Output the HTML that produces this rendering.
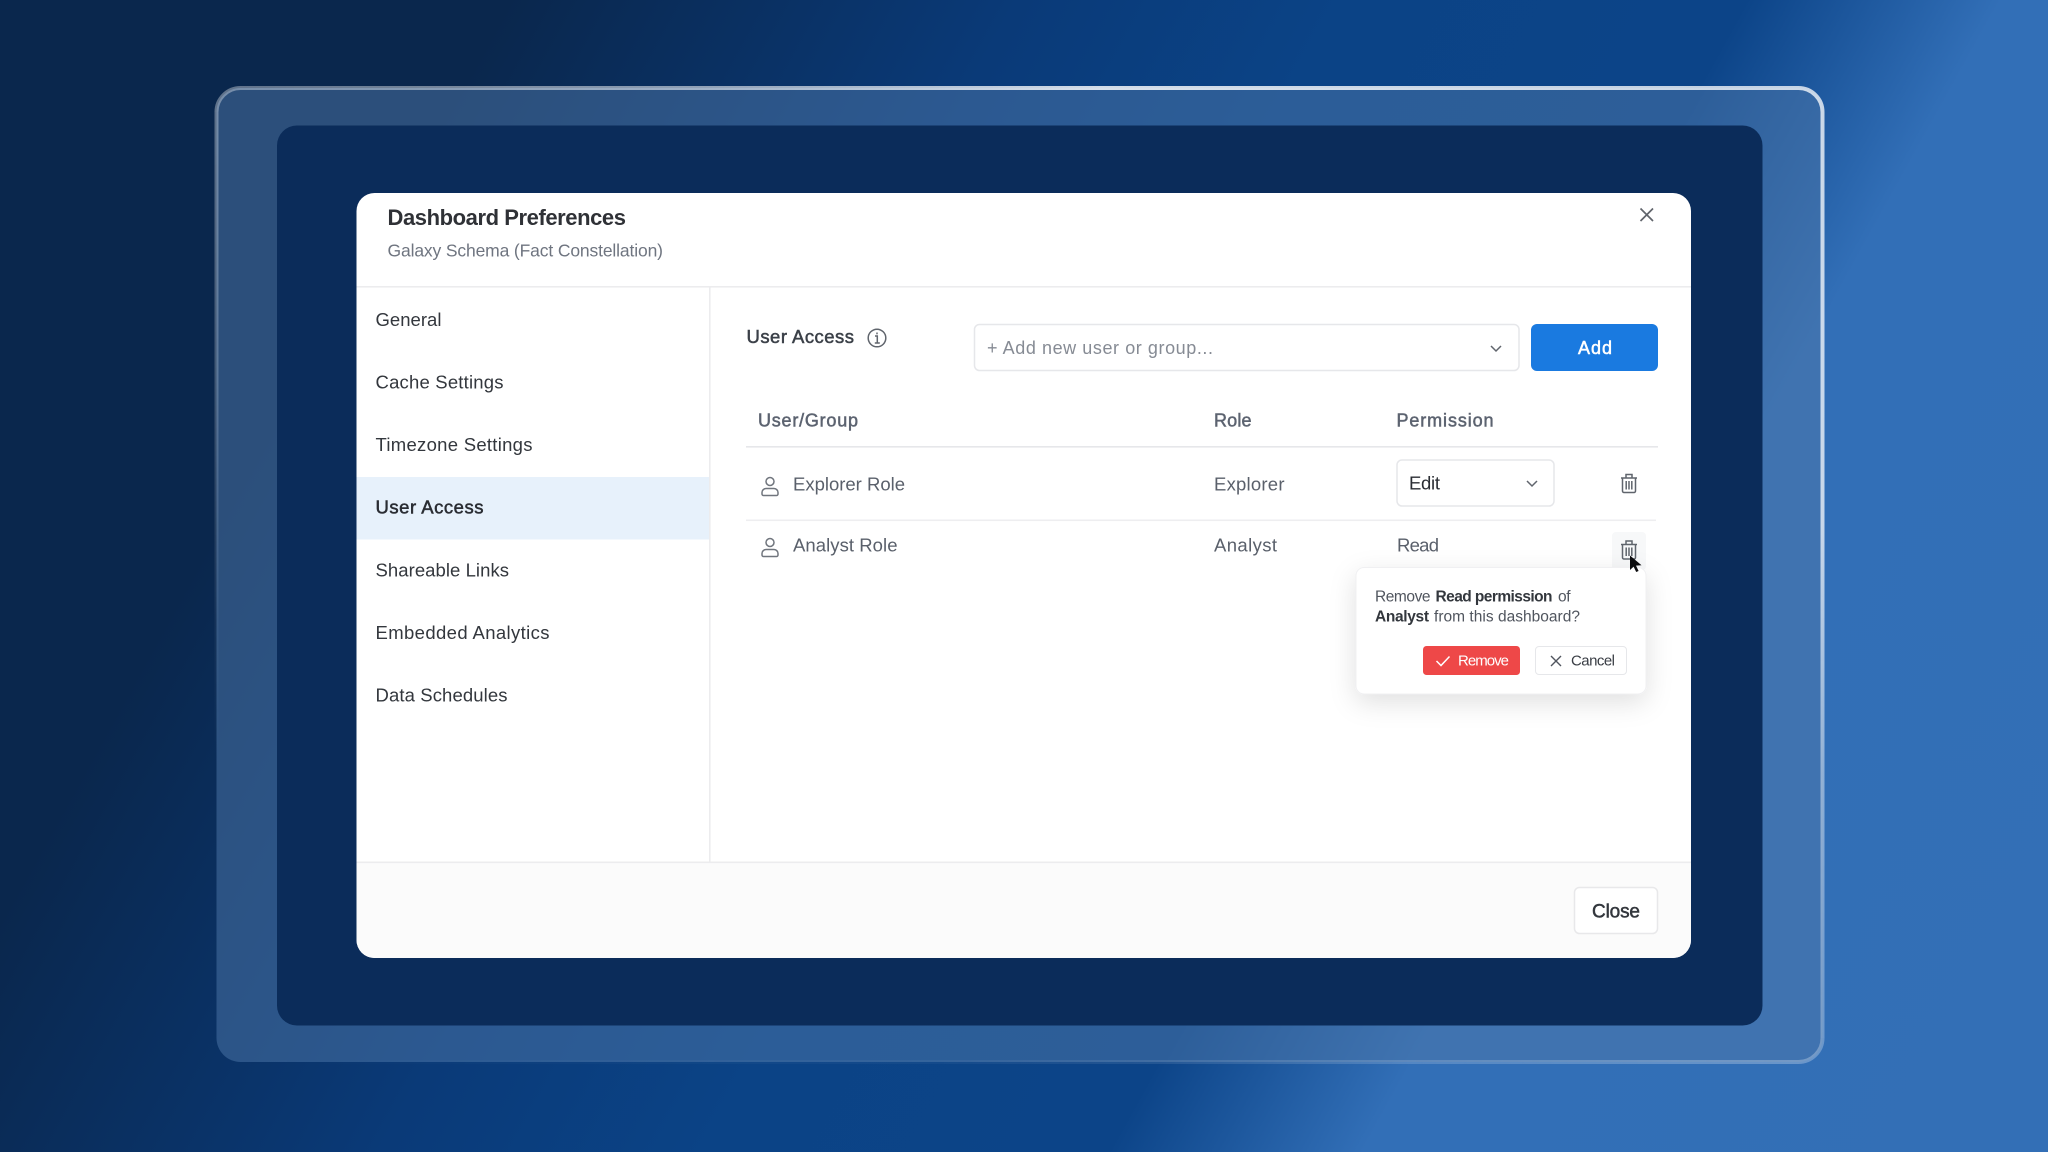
<!DOCTYPE html>
<html><head><meta charset="utf-8"><style>
html,body{margin:0;padding:0;width:2048px;height:1152px;overflow:hidden;background:linear-gradient(119deg,#0a274d 0%,#0a274d 19%,#0a3a78 38%,#0b4386 50%,#0c4488 65%,#326fb7 74.5%,#336fb6 100%)}
svg{position:absolute;left:0;top:0;display:block;filter:blur(.3px)}
text{font-family:"Liberation Sans",Arial,sans-serif;white-space:pre}
.m{stroke-width:.5px}
</style></head><body>
<svg width="2048" height="1152" viewBox="0 0 2048 1152" xmlns="http://www.w3.org/2000/svg">
<defs>
<linearGradient id="gt" gradientUnits="userSpaceOnUse" x1="216" y1="0" x2="1824" y2="0"><stop offset="0" stop-color="#fff" stop-opacity=".35"/><stop offset=".3" stop-color="#fff" stop-opacity=".55"/><stop offset=".55" stop-color="#fff" stop-opacity=".82"/><stop offset="1" stop-color="#fff" stop-opacity=".75"/></linearGradient>
<linearGradient id="gl" gradientUnits="userSpaceOnUse" x1="0" y1="88" x2="0" y2="1062"><stop offset="0" stop-color="#fff" stop-opacity=".35"/><stop offset=".3" stop-color="#fff" stop-opacity=".22"/><stop offset=".55" stop-color="#fff" stop-opacity=".05"/><stop offset=".7" stop-color="#fff" stop-opacity="0"/></linearGradient>
<linearGradient id="gr" gradientUnits="userSpaceOnUse" x1="0" y1="88" x2="0" y2="1062"><stop offset="0" stop-color="#fff" stop-opacity=".75"/><stop offset=".45" stop-color="#fff" stop-opacity=".72"/><stop offset=".7" stop-color="#fff" stop-opacity=".45"/><stop offset="1" stop-color="#fff" stop-opacity=".28"/></linearGradient>
<linearGradient id="gb" gradientUnits="userSpaceOnUse" x1="216" y1="0" x2="1824" y2="0"><stop offset="0" stop-color="#fff" stop-opacity="0"/><stop offset=".45" stop-color="#fff" stop-opacity=".04"/><stop offset="1" stop-color="#fff" stop-opacity=".28"/></linearGradient>
<filter id="ps" x="-25%" y="-30%" width="150%" height="170%"><feDropShadow dx="0" dy="8" stdDeviation="13" flood-color="#000" flood-opacity=".12"/></filter>
<clipPath id="mc"><rect x="356.5" y="193" width="1334.5" height="765" rx="18"/></clipPath>
<g id="tr" fill="none" stroke="#5f646c" stroke-width="1.5"><path d="M-8 -5.5H8M-3 -6V-9H3V-6M-6.5 -5.5V7.5A1.5 1.5 0 0 0 -5 9H5A1.5 1.5 0 0 0 6.5 7.5V-5.5M-2.8 -2.5V6M0 -2.5V6M2.8 -2.5V6"/></g>
<g id="pe" fill="none" stroke="#70757d" stroke-width="1.5"><circle cx="0" cy="-5" r="4"/><path d="M-4 2H4A4 4 0 0 1 8 6V7.5A1.5 1.5 0 0 1 6.5 9H-6.5A1.5 1.5 0 0 1 -8 7.5V6A4 4 0 0 1 -4 2Z"/></g>
</defs>
<rect x="216.5" y="88" width="1606" height="974" rx="24" fill="#4e78aa" fill-opacity=".5"/>
<g fill="none" stroke-width="4">
<path d="M216.5 112A24 24 0 0 1 240.5 88H1798.5A24 24 0 0 1 1822.5 112" stroke="url(#gt)"/>
<path d="M216.5 112V1038" stroke="url(#gl)"/>
<path d="M1822.5 112V1038" stroke="url(#gr)"/>
<path d="M216.5 1038A24 24 0 0 0 240.5 1062H1798.5A24 24 0 0 0 1822.5 1038" stroke="url(#gb)"/>
</g>
<rect x="277" y="125.5" width="1485.5" height="900" rx="20" fill="#0b2c5a"/>
<g clip-path="url(#mc)">
<rect x="356.5" y="193" width="1334.5" height="765" fill="#fff"/>
<rect x="356.5" y="862.5" width="1334.5" height="96" fill="#fbfbfb"/>
<rect x="356.5" y="477" width="352.5" height="62.5" fill="#e7f1fb"/>
<rect x="356.5" y="286" width="1334.5" height="1.6" fill="#ececee"/>
<rect x="709" y="287" width="1.6" height="575" fill="#ececee"/>
<rect x="356.5" y="861.5" width="1334.5" height="1.6" fill="#ececee"/>
</g>
<text x="387.5" y="225" font-size="22" font-weight="700" fill="#2f3136" textLength="238.5">Dashboard Preferences</text>
<text x="387.5" y="256.5" font-size="17.5" fill="#6f7580" textLength="275.5">Galaxy Schema (Fact Constellation)</text>
<path d="M1640.5 208.5L1653 221M1653 208.5L1640.5 221" stroke="#60646b" stroke-width="1.7" fill="none"/>
<g font-size="18.5" fill="#33373d">
<text x="375.5" y="326" textLength="66">General</text>
<text x="375.5" y="388.5" textLength="128">Cache Settings</text>
<text x="375.5" y="451" textLength="157">Timezone Settings</text>
<text x="375.5" y="513.5" textLength="108" fill="#2a2d33" stroke="#2a2d33" class="m">User Access</text>
<text x="375.5" y="576.5" textLength="133.5">Shareable Links</text>
<text x="375.5" y="639" textLength="174">Embedded Analytics</text>
<text x="375.5" y="701.5" textLength="132">Data Schedules</text>
</g>
<text x="746.5" y="343" font-size="18.5" fill="#3b4048" stroke="#3b4048" class="m" textLength="107.5">User Access</text>
<g fill="none" stroke="#60656d" stroke-width="1.5"><circle cx="877" cy="338" r="8.8"/><path d="M875 336H877.3V343M874.8 343H879.8"/><path d="M877 332.5v1.8"/></g>
<rect x="974.5" y="324.5" width="544.5" height="46" rx="5" fill="#fff" stroke="#e6e7ea" stroke-width="1.5"/>
<text x="987" y="354" font-size="18" fill="#868b94" textLength="226">+ Add new user or group...</text>
<path d="M1491 346L1496 351L1501 346" fill="none" stroke="#60656d" stroke-width="1.5"/>
<rect x="1531" y="324" width="127" height="47" rx="6" fill="#1a7ae0"/>
<text x="1578" y="354" font-size="18" fill="#fff" stroke="#fff" class="m" textLength="34">Add</text>
<g font-size="18" fill="#5c6370" stroke="#5c6370" class="m">
<text x="758" y="426.5" textLength="100">User/Group</text>
<text x="1214" y="426.5" textLength="37.5">Role</text>
<text x="1396.5" y="426.5" textLength="97">Permission</text>
</g>
<rect x="746" y="446" width="912" height="1.6" fill="#e6e7ea"/>
<use href="#pe" x="770" y="486.5"/>
<g font-size="18.5" fill="#5a606b">
<text x="793" y="490.5" textLength="112">Explorer Role</text>
<text x="1214" y="490.5" textLength="70.5">Explorer</text>
<text x="793" y="551.5" textLength="104.5">Analyst Role</text>
<text x="1214" y="551.5" textLength="63">Analyst</text>
<text x="1397" y="551.5" textLength="42">Read</text>
</g>
<rect x="1397" y="460" width="157" height="46" rx="5" fill="#fff" stroke="#e6e7ea" stroke-width="1.5"/>
<text x="1409" y="489.5" font-size="18.5" fill="#2a2d33" textLength="31">Edit</text>
<path d="M1527 481L1532 486L1537 481" fill="none" stroke="#60656d" stroke-width="1.5"/>
<use href="#tr" x="1629" y="483.5"/>
<rect x="746" y="519.5" width="910" height="1.6" fill="#eeeef0"/>
<use href="#pe" x="770" y="547.5"/>
<rect x="1612" y="532" width="34" height="38" rx="4" fill="#f7f8f9"/>
<use href="#tr" x="1629" y="550"/>
<rect x="1356" y="567.5" width="290" height="126.5" rx="8" fill="#fff" stroke="#f0f0f2" filter="url(#ps)"/>
<g font-size="15.5" fill="#50555e">
<text x="1375" y="601.5" textLength="55.5">Remove</text>
<text x="1435.5" y="601.5" font-weight="700" fill="#33373d" textLength="117">Read permission</text>
<text x="1558" y="601.5" textLength="12.5">of</text>
<text x="1375" y="621.5" font-weight="700" fill="#33373d" textLength="54">Analyst</text>
<text x="1434" y="621.5" textLength="146">from this dashboard?</text>
</g>
<rect x="1423" y="646" width="97" height="29" rx="3.5" fill="#ee4848"/>
<path d="M1436.5 661L1441 665.5L1449.5 656.5" fill="none" stroke="#fff" stroke-width="1.5"/>
<text x="1458" y="665.5" font-size="15" fill="#fff" textLength="51">Remove</text>
<rect x="1535.5" y="646.5" width="91" height="28" rx="3.5" fill="#fff" stroke="#e6e7ea"/>
<path d="M1551 656L1561 666M1561 656L1551 666" fill="none" stroke="#50555e" stroke-width="1.4"/>
<text x="1571" y="665.5" font-size="15" fill="#3a3e45" textLength="44">Cancel</text>
<path d="M1630 555.5V570L1633.6 566.6L1636.2 572L1638.6 571L1636 565.6L1641.5 565.2Z" fill="#0c0c0e"/>
<rect x="1574.5" y="887.5" width="83" height="46" rx="5" fill="#fff" stroke="#e8e8ea" stroke-width="1.5"/>
<text x="1592" y="917.5" font-size="19" fill="#33373d" stroke="#33373d" class="m" textLength="48">Close</text>
</svg>
</body></html>
